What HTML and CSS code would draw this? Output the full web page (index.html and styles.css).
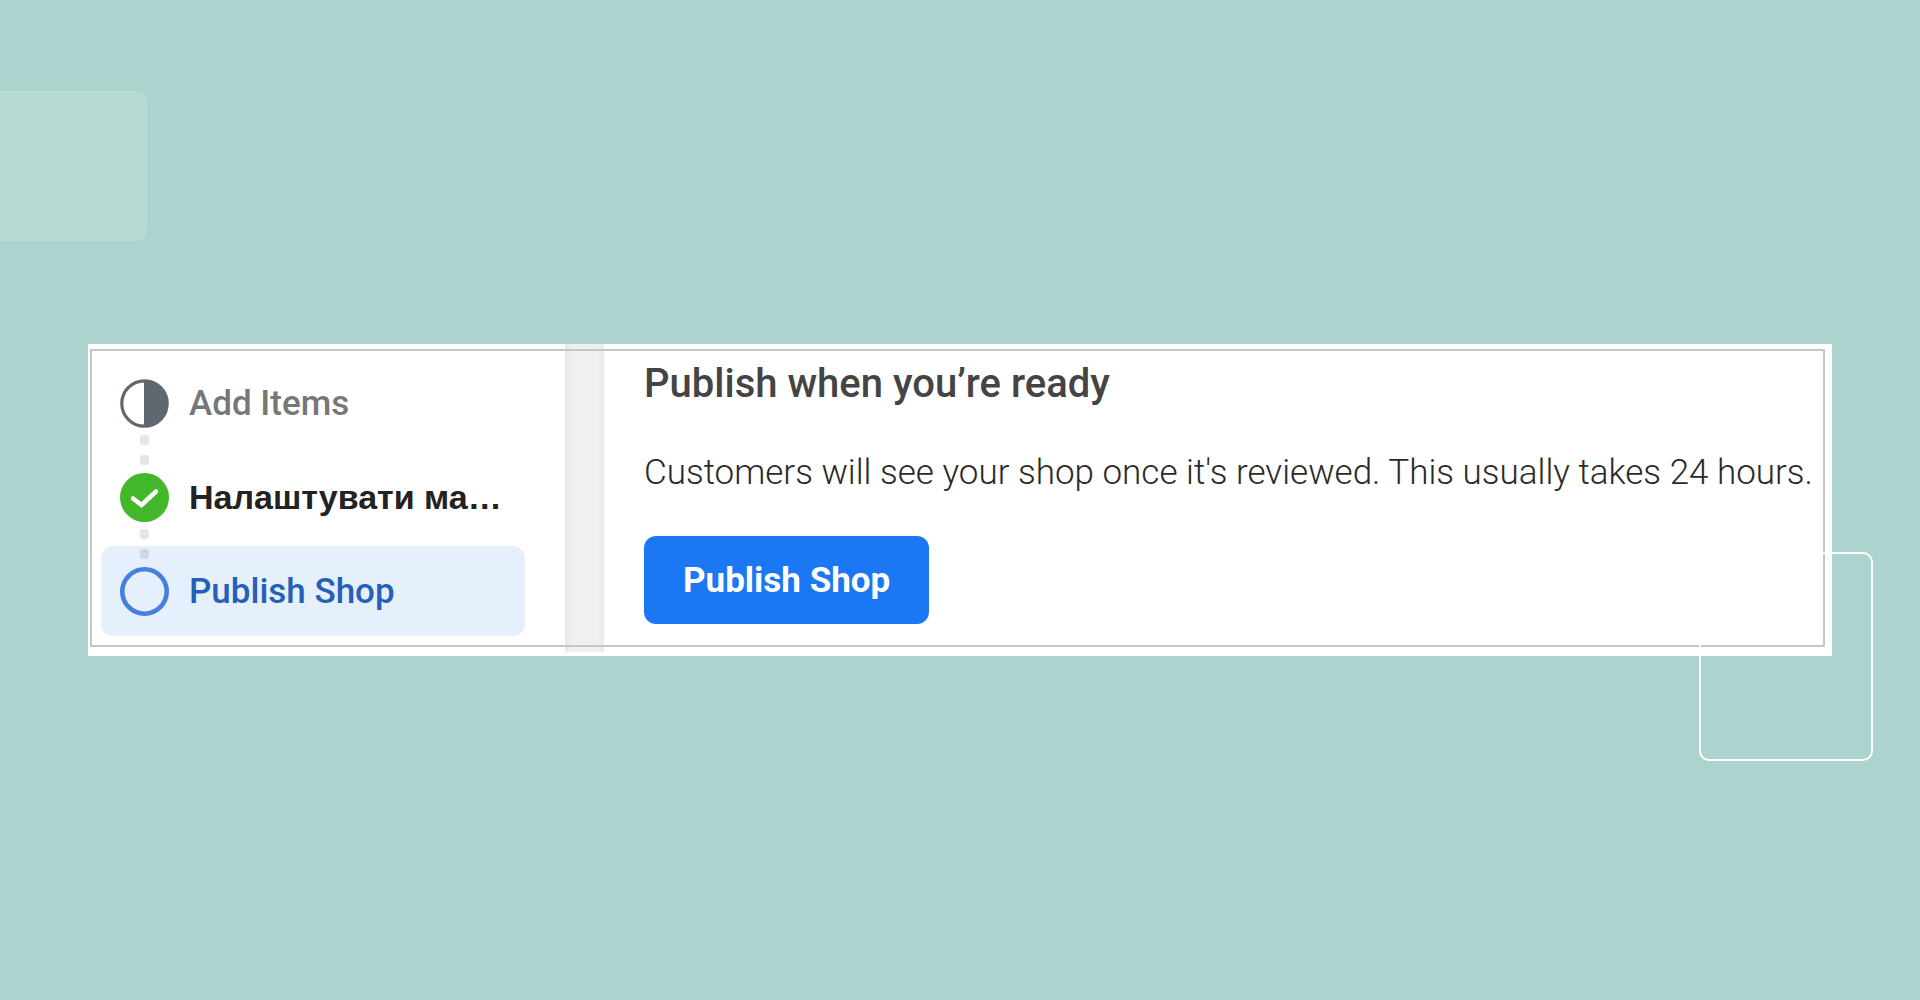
FILE: index.html
```html
<!DOCTYPE html>
<html lang="en">
<head>
<meta charset="utf-8">
<meta name="viewport" content="width=device-width, initial-scale=1">
<title>Publish Shop</title>
<link rel="stylesheet" href="styles.css">
</head>
<body>
<div class="accent-block"></div>
<main class="card">
  <nav class="steps">
    <a class="step" href="#items">
      <svg class="step-icon" viewBox="0 0 49 49" aria-hidden="true"><circle cx="24.500" cy="24.500" r="22.700" fill="#fff" stroke="#606770" stroke-width="3.200"/><path d="M24 1a23.500 23.500 0 0 1 0 47z" fill="#606770"/></svg>
      <span class="step-label">Add Items</span>
    </a>
    <a class="step step-done" href="#setup">
      <svg class="step-icon" viewBox="0 0 49 49" aria-hidden="true"><circle cx="24.500" cy="24.500" r="24.500" fill="#42b72a"/><path d="M13 25.500l8.500 6.500L36 18.500" fill="none" stroke="#fff" stroke-width="4.500" stroke-linecap="round" stroke-linejoin="miter"/></svg>
      <span lang="uk">Налаштувати ма…</span>
    </a>
    <a class="step step-active" href="#publish" aria-current="step">
      <svg class="step-icon" viewBox="0 0 49 49" aria-hidden="true"><circle cx="24.500" cy="24.500" r="22.200" fill="none" stroke="#4580de" stroke-width="4.600"/></svg>
      <span class="step-label">Publish Shop</span>
    </a>
  </nav>
  <div class="divider"></div>
  <section class="content" id="publish">
    <h1 class="title">Publish when you’re ready</h1>
    <p class="note">Customers will see your shop once it's reviewed. This usually takes 24 hours.</p>
    <button class="publish" type="button">Publish Shop</button>
  </section>
  <div class="accent-outline"></div>
</main>
</body>
</html>
```
FILE: styles.css
```css
* { box-sizing: border-box; }

body {
  margin: 0;
  min-height: 100vh;
  display: flex;
  align-items: center;
  padding: 0 88px;
  background: #acd3ce;
  font-family: Roboto, "Liberation Sans", sans-serif;
  font-size: 35px;
  line-height: 44px;
  overflow-x: hidden;
}

.accent-block {
  position: absolute;
  top: 91px;
  left: 0;
  width: 147px;
  height: 150px;
  border-radius: 0 10px 10px 0;
  background: #b7dad4;
}

.card {
  position: relative;
  flex: 1;
  min-width: 0;
  display: flex;
  background: #fff;
}

/* thin frame drawn over the card content */
.card::after {
  content: "";
  position: absolute;
  inset: 5px 7px 9px 2px;
  border: 2px solid #c6c6c6;
  pointer-events: none;
}

.steps {
  flex: none;
  width: 477px;
  padding: 14px 40px 20px 13px;
  display: flex;
  flex-direction: column;
  gap: 4px;
}

.step {
  position: relative;
  height: 90px;
  padding: 0 19px;
  display: flex;
  align-items: center;
  gap: 20px;
  border-radius: 12px;
  color: #777;
  font-weight: 500;
  text-decoration: none;
  white-space: nowrap;
}

.step-icon {
  flex: none;
  width: 49px;
  height: 49px;
}

.step-label { padding-top: 2px; }

.step-done {
  color: #222;
  font-family: "Liberation Sans", Arial, sans-serif;
  font-size: 34px;
  font-weight: 700;
}
.step-active { background: #e6f0fd; color: #2560b8; }

/* dotted connector up to the previous step */
.step + .step::before,
.step + .step::after {
  content: "";
  position: absolute;
  left: 39px;
  width: 9px;
  height: 10px;
  border-radius: 3px;
  background: rgba(0, 0, 0, 0.1);
}
.step + .step::before { top: -17px; }
.step + .step::after { top: 3px; }

.divider {
  flex: none;
  width: 39px;
  margin-bottom: 4px;
  background: linear-gradient(90deg, #e8e8e8, #f1f1f1 20%, #f1f1f1 80%, #eaeaea);
}

.content {
  flex: 1;
  min-width: 0;
  padding: 16px 8px 32px 40px;
}

.title {
  margin: 0 0 43px;
  color: #444;
  font-size: 40px;
  font-weight: 500;
  line-height: 48px;
}

.note {
  margin: 0 0 41px;
  color: #2a2a2a;
  font-weight: 350;
  white-space: nowrap;
}

.publish {
  display: block;
  height: 88px;
  padding: 2px 39px 0;
  border: 0;
  border-radius: 12px;
  background: #1b77f3;
  color: #fff;
  font: inherit;
  font-weight: 700;
}

.accent-outline {
  position: absolute;
  z-index: 1;
  right: -41px;
  bottom: -105px;
  width: 174px;
  height: 209px;
  border: 2px solid #fff;
  border-radius: 10px;
  pointer-events: none;
}
```
